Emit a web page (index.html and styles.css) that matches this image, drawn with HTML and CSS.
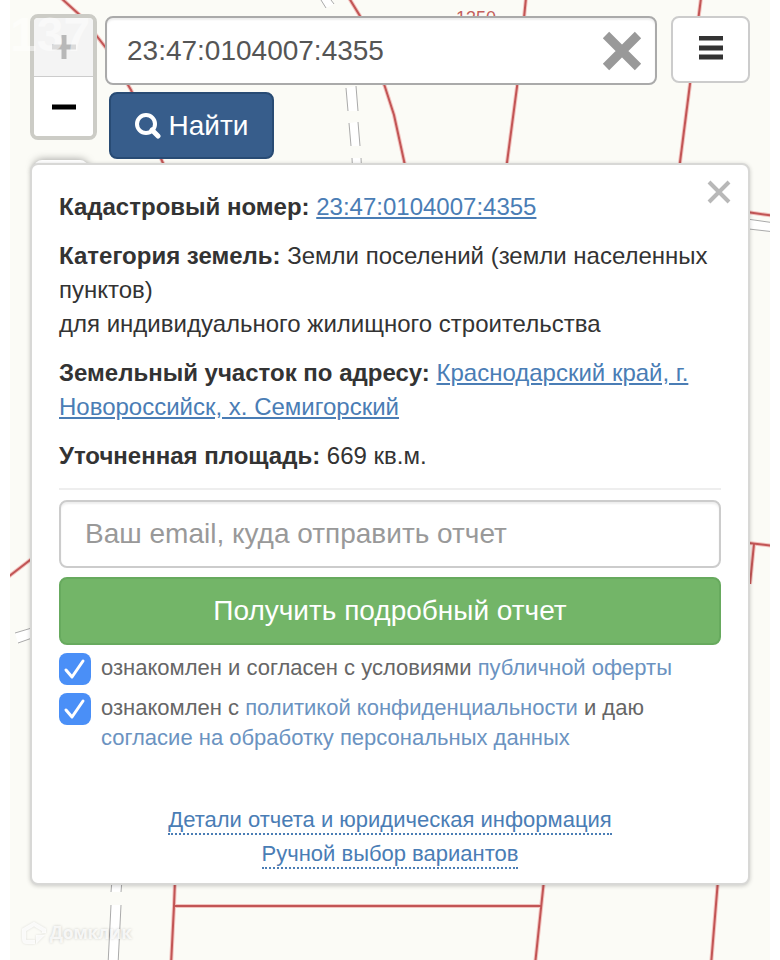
FILE: index.html
```html
<!DOCTYPE html>
<html lang="ru">
<head>
  <meta charset="UTF-8">
  <meta name="viewport" content="width=device-width, initial-scale=1.0">
  <title>Кадастровая карта</title>
  <link rel="stylesheet" href="styles.css">
</head>
<body>
  <div class="map">
    <!-- Parcel borders and roads -->
    <svg class="map-canvas" viewBox="0 0 760 960" preserveAspectRatio="xMidYMin slice" aria-hidden="true">
      <g class="road">
        <path d="M311 0l5 8l8-4l-3-4z"/>
        <path d="M336 88l2 23h10l-2-25z"/>
        <path d="M339 123l2 23h9l-2-24z"/>
        <path d="M342 158l1 20h9l-1-20z"/>
        <path d="M730 218l35 5v9l-35-4z"/>
        <path d="M5 633l20-6v9l-17 7z"/>
        <path d="M102 880l-1 12h10l1-12z"/>
        <path d="M101 905l-3 60h10l3-60z"/>
      </g>
      <g class="road-line">
        <path d="M311 0l5 8M321 0l3 4"/>
        <path d="M336 88l2 23M346 86l2 25"/>
        <path d="M339 123l2 23M348 122l2 24"/>
        <path d="M342 158l1 20M351 158l1 20"/>
        <path d="M730 218l35 5M730 228l35 4"/>
        <path d="M5 633l20-6M8 643l17-6"/>
        <path d="M102 880l-1 12M112 880l-1 12"/>
        <path d="M101 905l-3 60M111 905l-3 60"/>
      </g>
      <g class="parcel-glow">
        <path d="M51-2L72 17L96 48L121 90L156 170"/>
        <path d="M339-2L350 16L375 87L384 115L396 170"/>
        <path d="M516-2L507 87L496 170"/>
        <path d="M691-2L680 84L669 170"/>
        <path d="M730 211L765 216"/>
        <path d="M730 542L765 546M744 544L740 584"/>
        <path d="M-2 577L24 557"/>
        <path d="M165 880L164 906L161 965M164 906H532"/>
        <path d="M534 880L525 965M708 880L701 965"/>
      </g>
      <g class="parcel">
        <path d="M51-2L72 17L96 48L121 90L156 170"/>
        <path d="M339-2L350 16L375 87L384 115L396 170"/>
        <path d="M516-2L507 87L496 170"/>
        <path d="M691-2L680 84L669 170"/>
        <path d="M730 211L765 216"/>
        <path d="M730 542L765 546M744 544L740 584"/>
        <path d="M-2 577L24 557"/>
        <path d="M165 880L164 906L161 965M164 906H532"/>
        <path d="M534 880L525 965M708 880L701 965"/>
      </g>
      <text class="parcel-label" x="446" y="24">1350</text>
    </svg>

    <div class="toolbar">
      <div class="zoom-column">
        <div class="zoom">
          <button class="zoom-btn zoom-in" type="button" aria-label="Приблизить" disabled>
            <svg width="24" height="24" viewBox="0 0 24 24"><path d="M12 0v24M0 12h24" stroke="currentColor" stroke-width="5"/></svg>
          </button>
          <button class="zoom-btn" type="button" aria-label="Отдалить">
            <svg width="24" height="24" viewBox="0 0 24 24"><path d="M0 12h24" stroke="currentColor" stroke-width="5"/></svg>
          </button>
        </div>
        <div class="layers-tab"></div>
      </div>

      <form class="search">
        <div class="search-box">
          <input class="search-input" type="text" aria-label="Кадастровый номер" value="23:47:0104007:4355">
          <button class="clear-btn" type="button" aria-label="Очистить">
            <svg width="40" height="40" viewBox="0 0 40 40"><path d="M4 4L36 36M36 4L4 36" stroke="currentColor" stroke-width="9"/></svg>
          </button>
        </div>
        <button class="find-btn" type="submit">
          <svg width="26" height="26" viewBox="0 0 26 26" fill="none" stroke="currentColor" stroke-width="4">
            <circle cx="11" cy="11" r="9"/>
            <path d="M17 17l6 6" stroke-width="5" stroke-linecap="round"/>
          </svg>
          Найти
        </button>
      </form>

      <button class="menu-btn" type="button" aria-label="Меню">
        <svg width="24" height="24" viewBox="0 0 24 24"><path d="M0 2h24M0 12h24M0 21h24" stroke="currentColor" stroke-width="5"/></svg>
      </button>
    </div>

    <div class="card">
      <button class="close-btn" type="button" aria-label="Закрыть">
        <svg width="24" height="24" viewBox="0 0 24 24"><path d="M2 2L22 22M22 2L2 22" stroke="currentColor" stroke-width="4"/></svg>
      </button>

      <p><b>Кадастровый номер:</b> <a href="#">23:47:0104007:4355</a></p>
      <p><b>Категория земель:</b> Земли поселений (земли населенных пунктов)<br>для индивидуального жилищного строительства</p>
      <p><b>Земельный участок по адресу:</b> <a href="#">Краснодарский край, г. Новороссийск, х. Семигорский</a></p>
      <p><b>Уточненная площадь:</b> 669 кв.м.</p>
      <hr>

      <form class="report">
        <input class="email" type="email" aria-label="Email" placeholder="Ваш email, куда отправить отчет">
        <button class="report-btn" type="submit">Получить подробный отчет</button>
        <div class="agree">
          <input type="checkbox" id="offer" checked>
          <label for="offer">ознакомлен и согласен с условиями <a href="#">публичной оферты</a></label>
        </div>
        <div class="agree">
          <input type="checkbox" id="policy" checked>
          <label for="policy">ознакомлен с <a href="#">политикой конфиденциальности</a> и даю <a href="#">согласие на обработку персональных данных</a></label>
        </div>
      </form>

      <div class="details">
        <a href="#">Детали отчета и юридическая информация</a>
        <a href="#">Ручной выбор вариантов</a>
      </div>
    </div>

    <span class="counter">137</span>
    <div class="watermark">
      <svg width="24" height="24" viewBox="0 0 24 24" fill="none" stroke="currentColor" stroke-width="4">
        <path d="M13 21H5Q2 21 2 18V9L12 3L22 9V12"/>
        <path d="M14 14h9l-9 9z" fill="currentColor" stroke="none"/>
      </svg>
      Домклик
    </div>
  </div>
</body>
</html>
```

FILE: styles.css
```css
* {
  box-sizing: border-box;
}

body {
  margin: 0;
  font-family: "Liberation Sans", Arial, sans-serif;
  font-size: 24px;
  line-height: 34px;
  color: #333;
  background-color: #fff;
}

button, input {
  font-family: inherit;
  margin: 0;
}

button {
  display: flex;
  align-items: center;
  justify-content: center;
  padding: 0;
  cursor: pointer;
}

a {
  color: #4a7db5;
}

.map {
  position: relative;
  min-height: 100vh;
  margin: 0 10px;
  padding: 14px 20px 0;
  background-color: #fbfbf6;
  overflow: hidden;
}

/* Map background */
.map-canvas {
  position: absolute;
  top: 0;
  left: 0;
  width: 100%;
  height: 100%;
}

.road {
  fill: #fff;
}

.road-line {
  fill: none;
  stroke: #aaa;
}

.parcel-glow {
  fill: none;
  stroke: #f2c4c0;
  stroke-width: 4;
}

.parcel {
  fill: none;
  stroke: #c25555;
  stroke-width: 2;
}

.parcel-label {
  fill: #c4605c;
  font-size: 18px;
}

/* Toolbar */
.toolbar {
  position: relative;
  display: flex;
  align-items: flex-start;
}

.zoom-column {
  width: 67px;
}

.zoom {
  border: 4px solid #ccccc6;
  border-radius: 8px;
  overflow: hidden;
}

.zoom-btn {
  width: 100%;
  height: 59px;
  border: none;
  background-color: #fff;
  color: #000;
}

.zoom-in {
  border-bottom: 1px solid #ccc;
  background-color: #f4f4f4;
  color: #b8b8b8;
}

.layers-tab {
  height: 9px;
  margin: 20px 9px 0 4px;
  border-radius: 8px 8px 0 0;
  background-color: #fff;
  box-shadow: 0 0 8px rgba(0, 0, 0, 0.4);
}

.search {
  flex: 1;
  margin: 2px 14px 0 8px;
}

.search-box {
  display: flex;
  align-items: center;
  height: 69px;
  padding: 0 13px 0 20px;
  border: 2px solid #aaa;
  border-radius: 8px;
  background-color: #fff;
  box-shadow: inset 0 2px 2px rgba(0, 0, 0, 0.07);
}

.search-input {
  flex: 1;
  min-width: 0;
  padding: 0;
  border: none;
  outline: none;
  background: none;
  font-size: 28px;
  color: #555;
}

.clear-btn {
  border: none;
  background: none;
  color: #999;
}

.find-btn {
  gap: 8px;
  width: 165px;
  height: 67px;
  margin: 7px 0 0 4px;
  border: 2px solid #284b74;
  border-radius: 8px;
  background-color: #375d8b;
  font-size: 28px;
  color: #fff;
}

.menu-btn {
  width: 79px;
  height: 67px;
  margin-top: 2px;
  padding-bottom: 3px;
  border: 2px solid #ccc;
  border-radius: 8px;
  background-color: #fff;
  color: #333;
}

/* Parcel card */
.card {
  position: relative;
  margin-top: -6px;
  padding: 25px 27px 14px;
  border: 2px solid #d8d8d6;
  border-radius: 8px;
  background-color: #fff;
  box-shadow: 0 1px 4px rgba(0, 0, 0, 0.2);
}

.card p {
  margin: 0 0 15px;
}

.card hr {
  height: 2px;
  margin: 0 0 10px;
  border: none;
  background-color: #eee;
}

.close-btn {
  position: absolute;
  top: 15px;
  right: 17px;
  border: none;
  background: none;
  color: #b8b8b8;
}

.email,
.report-btn {
  width: 100%;
  height: 68px;
  border-radius: 8px;
  font-size: 28px;
}

.email {
  display: block;
  margin-bottom: 9px;
  padding: 0 24px;
  border: 2px solid #ccc;
  background-color: #fff;
  box-shadow: inset 0 2px 2px rgba(0, 0, 0, 0.07);
}

.email::placeholder {
  color: #999;
}

.report-btn {
  margin-bottom: 8px;
  border: 2px solid #67aa5e;
  background-color: #73b568;
  color: #fff;
}

.agree {
  display: flex;
  align-items: flex-start;
  gap: 10px;
  margin-bottom: 8px;
  font-size: 22px;
  line-height: 30px;
  color: #666;
}

.agree a {
  color: #6b93c1;
  text-decoration: none;
}

.agree input {
  flex: none;
  width: 32px;
  height: 32px;
  appearance: none;
  border-radius: 8px;
  background: #4a8ff7 url("data:image/svg+xml,%3Csvg xmlns='http://www.w3.org/2000/svg' viewBox='0 0 32 32'%3E%3Cpath d='M7 17l6 7L24 8' fill='none' stroke='white' stroke-width='3' stroke-linecap='round' stroke-linejoin='round'/%3E%3C/svg%3E");
}

.details {
  display: flex;
  flex-direction: column;
  align-items: center;
  gap: 6px;
  margin-top: 54px;
}

.details a {
  border-bottom: 2px dotted #4a7db5;
  font-size: 22px;
  line-height: 26px;
  text-decoration: none;
}

/* Photo overlays */
.counter {
  position: absolute;
  top: 8px;
  left: 0;
  font-size: 48px;
  font-weight: bold;
  line-height: 54px;
  color: rgba(255, 255, 255, 0.5);
  pointer-events: none;
}

.watermark {
  position: absolute;
  bottom: 10px;
  left: 12px;
  display: flex;
  align-items: center;
  gap: 4px;
  font-family: "Open Sans", sans-serif;
  font-size: 17px;
  font-weight: bold;
  color: rgba(255, 255, 255, 0.8);
  text-shadow: 0 0 3px rgba(0, 0, 0, 0.2);
}

.watermark svg {
  filter: drop-shadow(0 0 1px rgba(0, 0, 0, 0.15));
}
```
